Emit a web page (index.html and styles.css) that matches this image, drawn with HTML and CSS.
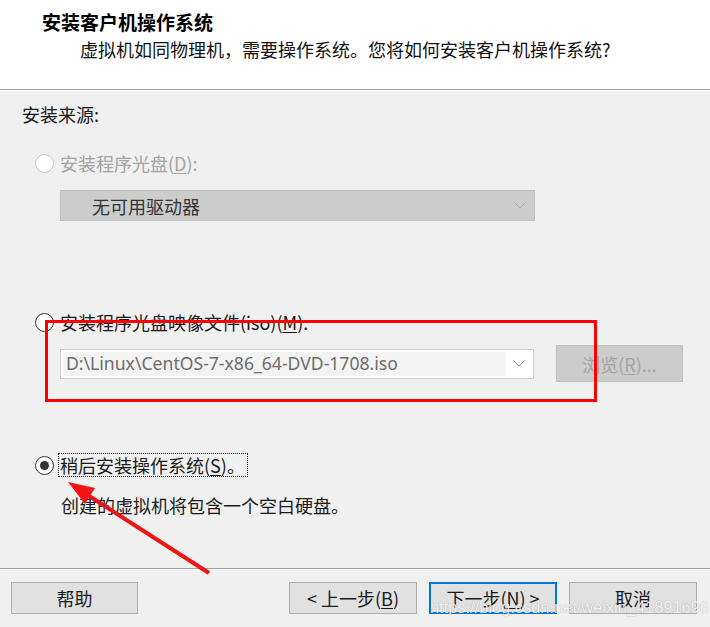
FILE: index.html
```html
<!DOCTYPE html>
<html lang="zh-CN">
<head>
<meta charset="utf-8">
<title>安装客户机操作系统</title>
<link rel="stylesheet" href="styles.css">
</head>
<body>
<div class="page">
  <header class="head">
    <div class="title">安装客户机操作系统</div>
    <div class="subtitle">虚拟机如同物理机，需要操作系统。您将如何安装客户机操作系统?</div>
  </header>
  <main class="main">
    <div class="section-label">安装来源:</div>
    <div class="radio-row disabled row-disc">
      <span class="radio"></span>
      <span class="label">安装程序光盘(<u>D</u>):</span>
    </div>
    <div class="combo combo-disabled">
      <span class="combo-text">无可用驱动器</span>
      <svg class="chev" width="12" height="7" viewBox="0 0 12 7"><path d="M0.5 0.5 L6 6 L11.5 0.5" fill="none" stroke="#a6a6a6" stroke-width="1"/></svg>
    </div>
    <div class="radio-row row-iso">
      <span class="radio"></span>
      <span class="label">安装程序光盘映像文件(iso)(<u>M</u>):</span>
    </div>
    <div class="iso-row">
      <div class="combo combo-iso">
        <span class="edit">D:\Linux\CentOS-7-x86_64-DVD-1708.iso</span>
        <svg class="chev" width="12" height="7" viewBox="0 0 12 7"><path d="M0.5 0.5 L6 6 L11.5 0.5" fill="none" stroke="#888888" stroke-width="1"/></svg>
      </div>
      <div class="btn btn-disabled browse">浏览(<u>R</u>)...</div>
    </div>
    <div class="radio-row row-later">
      <span class="radio checked"></span>
      <span class="label focus">稍后安装操作系统(<u>S</u>)。</span>
    </div>
    <div class="desc">创建的虚拟机将包含一个空白硬盘。</div>
  </main>
  <footer class="foot">
    <div class="btn btn-help">帮助</div>
    <div class="btn-group">
      <div class="btn">&lt; 上一步(<u>B</u>)</div>
      <div class="btn primary">下一步(<u>N</u>) &gt;</div>
      <div class="btn">取消</div>
    </div>
  </footer>
  <div class="highlight"></div>
  <svg class="arrow" width="710" height="627" viewBox="0 0 710 627">
    <line x1="209" y1="573" x2="86" y2="494" stroke="#f01414" stroke-width="4"/>
    <polygon points="68,482 85,504 95,488" fill="#f01414"/>
  </svg>
  <div class="watermark">https://blog.csdn.net/weixin_41891696</div>
</div>
</body>
</html>
```
FILE: styles.css
```css
* { box-sizing: border-box; }
html, body { margin: 0; padding: 0; }
body {
  background: #f0f0f0;
  font-family: "Noto Sans CJK SC", "Noto Sans", sans-serif;
  color: #1a1a1a;
}
.page {
  position: relative;
  width: 710px;
  height: 627px;
  overflow: hidden;
  background: #f0f0f0;
}
.head {
  height: 90px;
  background: #ffffff;
  border-bottom: 1px solid #a0a0a0;
  padding-top: 10px;
}
.title {
  padding-left: 42px;
  font-size: 19px;
  font-weight: bold;
  line-height: 24px;
  color: #000;
}
.subtitle {
  margin-top: 3px;
  padding-left: 80px;
  font-size: 18px;
  line-height: 24px;
  color: #111;
}
.main {
  height: 478px;
  border-top: 1px solid #ffffff;
  padding: 11px 0 0 22px;
  font-size: 18px;
}
.section-label {
  line-height: 24px;
  color: #1a1a1a;
}
.radio-row {
  display: flex;
  align-items: center;
  height: 24px;
  margin-left: 13px;
}
.row-disc { margin-top: 25px; }
.row-iso { margin-top: 89px; }
.row-later { margin-top: 71px; }
.radio {
  width: 19px;
  height: 19px;
  border-radius: 50%;
  border: 1px solid #333;
  background: #fff;
  display: flex;
  align-items: center;
  justify-content: center;
  flex: none;
}
.disabled .radio { border-color: #c4c4c4; }
.radio.checked::after {
  content: "";
  width: 9px;
  height: 9px;
  border-radius: 50%;
  background: #333;
}
.label {
  margin-left: 6px;
  line-height: 24px;
  color: #1a1a1a;
}
.disabled .label { color: #a3a3a3; }
.label.focus {
  margin-left: 5px;
  padding: 0 2px 0 1px;
  line-height: 22px;
  outline: 1px dotted #222;
}
u { text-underline-offset: 2px; }
.combo {
  display: flex;
  align-items: center;
  margin-left: 38px;
  border: 1px solid #c4c4c4;
}
.combo-disabled {
  margin-top: 15px;
  width: 475px;
  height: 31px;
  background: #cccccc;
  border-color: #bfbfbf;
}
.combo-text {
  flex: 1;
  padding-left: 31px;
  line-height: 24px;
  color: #333;
}
.chev { flex: none; margin-right: 8px; }
.iso-row {
  display: flex;
  align-items: center;
  margin-top: 11px;
  height: 37px;
}
.combo-iso {
  width: 474px;
  height: 30px;
  background: #ffffff;
  border-color: #cccccc;
  padding: 2px;
}
.edit {
  width: 443px;
  height: 24px;
  background: #f3f3f3;
  padding-left: 3px;
  font-family: "Noto Sans", "Open Sans", sans-serif;
  font-size: 17.6px;
  line-height: 22px;
  color: #6d6d6d;
  white-space: nowrap;
}
.combo-iso .chev { margin-left: auto; margin-right: 6px; }
.btn {
  display: flex;
  align-items: center;
  justify-content: center;
  width: 128px;
  height: 32px;
  background: #e1e1e1;
  border: 1px solid #adadad;
  font-size: 18px;
  color: #1a1a1a;
  line-height: 24px;
}
.btn-disabled {
  background: #cccccc;
  border-color: #bfbfbf;
  color: #a3a3a3;
}
.browse {
  margin-left: 22px;
  width: 127px;
  height: 37px;
}
.desc {
  margin-top: 16px;
  margin-left: 39px;
  line-height: 24px;
  color: #1a1a1a;
}
.foot {
  display: flex;
  justify-content: space-between;
  height: 59px;
  border-top: 1px solid #a0a0a0;
  box-shadow: inset 0 1px 0 #ffffff;
  padding: 13px 13px 0 11px;
}
.btn-help { width: 127px; }
.btn-group {
  display: flex;
  gap: 12px;
}
.primary {
  border: 2px solid #0078d7;
}
.highlight {
  position: absolute;
  left: 45px;
  top: 320px;
  width: 552px;
  height: 82px;
  border: 3px solid #ff0000;
  pointer-events: none;
}
.arrow {
  position: absolute;
  left: 0;
  top: 0;
  pointer-events: none;
}
.watermark {
  position: absolute;
  left: 430px;
  top: 597px;
  font-family: "Liberation Sans", Arial, sans-serif;
  font-size: 16.4px;
  line-height: 20px;
  color: rgba(255, 255, 255, 0.88);
  text-shadow: 0 0 1px rgba(0, 0, 0, 0.35);
  white-space: nowrap;
  pointer-events: none;
}
```
